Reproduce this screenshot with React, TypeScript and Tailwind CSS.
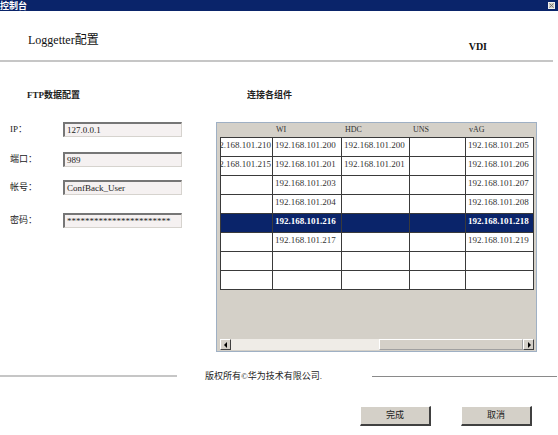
import React from 'react';

const serif = "font-['Liberation_Serif','Noto_Sans_CJK_SC',serif]";

const rows: string[][] = [
  ['192.168.101.210', '192.168.101.200', '192.168.101.200', '', '192.168.101.205'],
  ['192.168.101.215', '192.168.101.201', '192.168.101.201', '', '192.168.101.206'],
  ['', '192.168.101.203', '', '', '192.168.101.207'],
  ['', '192.168.101.204', '', '', '192.168.101.208'],
  ['', '192.168.101.216', '', '', '192.168.101.218'],
  ['', '192.168.101.217', '', '', '192.168.101.219'],
  ['', '', '', '', ''],
  ['', '', '', '', ''],
];

const headers = ['', 'WI', 'HDC', 'UNS', 'vAG'];
const SELECTED = 4;

function Field({ label, value, mt }: { label: string; value: string; mt: string }) {
  return (
    <div className={`flex items-center h-[15px] ${mt}`}>
      <span className="w-[63px] pl-[10px] text-[9px] leading-[11px] text-[#222]">{label}</span>
      <div className="w-[119px] h-[15px] bg-[#f5f1f1] border-t-2 border-l-2 border-b border-r border-t-[#767676] border-l-[#767676] border-b-[#d6d3ce] border-r-[#d6d3ce] flex items-center pl-[2px] text-[9px] leading-[11px] text-[#222] whitespace-nowrap overflow-hidden">
        {value}
      </div>
    </div>
  );
}

function Arrow({ dir }: { dir: 'left' | 'right' }) {
  return (
    <div className="w-[11px] h-[11px] bg-[#d4d0c8] border-t border-l border-white border-b border-r border-b-[#404040] border-r-[#404040] flex items-center justify-center">
      <svg width="4" height="6" viewBox="0 0 4 6">
        {dir === 'left' ? <path d="M3 0 L0 3 L3 6 Z" fill="#000" /> : <path d="M1 0 L4 3 L1 6 Z" fill="#000" />}
      </svg>
    </div>
  );
}

export default function App() {
  return (
    <div className={`w-[558px] h-[435px] bg-white overflow-hidden ${serif} text-[#222]`}>
      {/* Title bar */}
      <div className="h-[11px] bg-[#0a246a] flex items-center justify-between">
        <span className="text-[9px] leading-[11px] font-bold text-white font-['Noto_Sans_CJK_SC',sans-serif]">控制台</span>
        <div className="w-[7px] h-[7px] mr-[3px] bg-[#d4d0c8] border border-[#f0f0f0] flex items-center justify-center">
          <svg width="5" height="5" viewBox="0 0 5 5">
            <path d="M0.5 0.5 L4.5 4.5 M4.5 0.5 L0.5 4.5" stroke="#666" strokeWidth="0.8" />
          </svg>
        </div>
      </div>

      {/* Header */}
      <div className="h-[49px] flex justify-between">
        <span className="mt-[22px] ml-[28px] text-[12px] leading-[14px] text-[#111]">Loggetter配置</span>
        <span className="mt-[30px] mr-[71px] text-[10px] leading-[12px] font-bold text-[#111]">VDI</span>
      </div>
      <div className="w-[553px] h-[2px] bg-[#c6c6c6]" />

      {/* Main */}
      <div className="flex">
        <div className="w-[216px]">
          <div className="mt-[27px] pl-[27px] h-[12px] text-[9px] leading-[12px] font-bold">FTP数据配置</div>
          <div className="mt-[21px]">
            <Field label="IP：" value="127.0.0.1" mt="" />
            <Field label="端口：" value="989" mt="mt-[15px]" />
            <Field label="帐号：" value="ConfBack_User" mt="mt-[13px]" />
            <Field label="密码：" value="***********************" mt="mt-[18px]" />
          </div>
        </div>

        <div className="w-[321px]">
          <div className="mt-[27px] pl-[31px] h-[12px] text-[9px] leading-[12px] font-bold">连接各组件</div>
          <div className="mt-[21px] h-[230px] bg-[#d4d0c8] border border-[#9fb0c4] pl-[3px] flex flex-col">
            <div className="grid grid-cols-[53px_69px_68px_56px_68px] h-[14px]">
              {headers.map((h, i) => (
                <div key={i} className="pl-[3px] text-[8px] leading-[14px] text-[#333]">{h}</div>
              ))}
            </div>
            <div className="w-[314px] border-l border-t border-[#3a3a3a]">
              {rows.map((row, r) => (
                <div
                  key={r}
                  className={`grid grid-cols-[52px_69px_68px_56px_68px] h-[19px] ${r === SELECTED ? 'bg-[#0a246a]' : 'bg-white'}`}
                >
                  {row.map((cell, c) => (
                    <div
                      key={c}
                      className={`border-r border-b border-[#3a3a3a] overflow-hidden whitespace-nowrap text-[9px] leading-[11px] pt-[2px] flex ${
                        c === 0 ? 'justify-end pr-[1px]' : 'pl-[2px]'
                      } ${r === SELECTED ? 'text-white font-bold' : 'text-[#333]'}`}
                    >
                      {cell}
                    </div>
                  ))}
                </div>
              ))}
            </div>
            <div className="flex-1" />
            <div className="w-[314px] h-[11px] mb-[1px] flex">
              <Arrow dir="left" />
              <div className="w-[148px] h-[11px] bg-[#efece7]" />
              <div className="flex-1 h-[11px] bg-[#d4d0c8] border-t border-l border-white border-b border-r border-b-[#a0a0a0] border-r-[#a0a0a0]" />
              <Arrow dir="right" />
            </div>
          </div>
        </div>
      </div>

      {/* Footer */}
      <div className="mt-[18px] h-[12px] flex items-center">
        <div className="w-[177px] h-[2px] bg-[#c6c6c6]" />
        <span className="ml-[28px] text-[9px] leading-[12px] text-[#222]">版权所有©华为技术有限公司.</span>
        <div className="ml-[50px] w-[185px] h-px bg-[#8a8a8a]" />
      </div>

      <div className="mt-[24px] pl-[360px] flex gap-[30px]">
        {['完成', '取消'].map((t) => (
          <div
            key={t}
            className="w-[71px] h-[20px] bg-[#d4d0c8] border-t border-l border-white border-b-2 border-r-2 border-b-[#404040] border-r-[#404040] flex items-center justify-center text-[9px] leading-[11px] text-[#222]"
          >
            {t}
          </div>
        ))}
      </div>
    </div>
  );
}
